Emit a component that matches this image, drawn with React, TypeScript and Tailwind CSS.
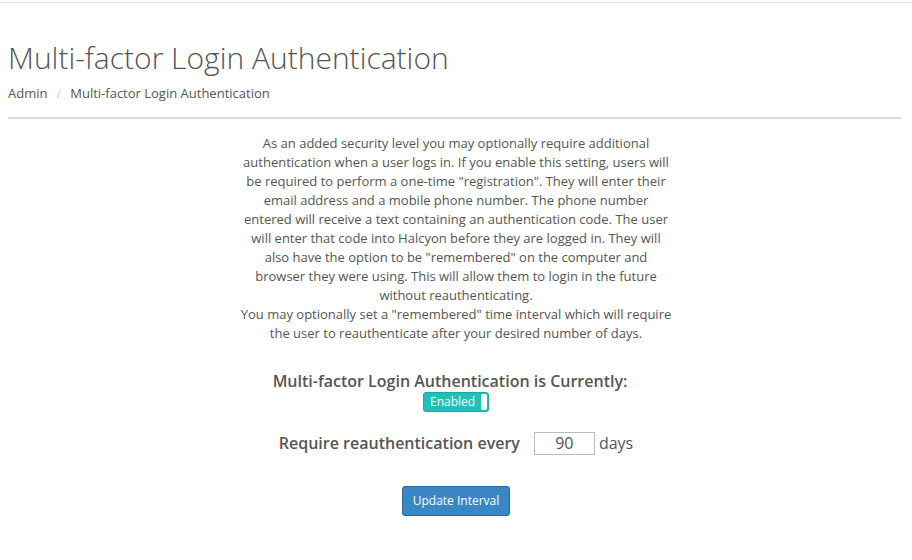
import React from "react";

export default function App() {
  return (
    <div className="w-[912px] h-[560px] bg-white overflow-hidden" style={{ fontFamily: '"Open Sans", sans-serif' }}>
      <div className="h-[2px]" />
      <div className="h-px bg-[#e6e6e6]" />
      <div className="px-2">
        <h1 className="mt-[38px] text-[30px] leading-[33px] font-light text-[#555]">Multi-factor Login Authentication</h1>
        <div className="mt-[10px] flex items-center text-[13px] leading-[18px] text-[#555]">
          <span>Admin</span>
          <span className="px-[9px] text-[#ccc]">/</span>
          <span>Multi-factor Login Authentication</span>
        </div>
        <div className="mt-[15px] mr-[2px] h-[2px] bg-[#dcdcdc]" />
        <div className="flex flex-col items-center text-[#555]">
          <p className="mt-[15px] w-[432px] text-center text-[13px] leading-[19px]">
            As an added security level you may optionally require additional authentication when a user logs in. If you enable this setting, users will be required to perform a one-time "registration". They will enter their email address and a mobile phone number. The phone number entered will receive a text containing an authentication code. The user will enter that code into Halcyon before they are logged in. They will also have the option to be "remembered" on the computer and browser they were using. This will allow them to login in the future without reauthenticating.
            <br />
            You may optionally set a "remembered" time interval which will require the user to reauthenticate after your desired number of days.
          </p>
          <div className="mt-[27px] pr-[12px] text-[16px] leading-[22px] font-semibold">Multi-factor Login Authentication is Currently:</div>
          <div className="flex h-[20px] w-[66px] items-center rounded-[3px] border border-[#1aa9a3] bg-[#22c0b9] pl-[6px] pr-[1px]">
            <span className="flex-1 text-[12px] leading-[18px] text-white">Enabled</span>
            <span className="h-[16px] w-[6px] rounded-[2px] bg-white" />
          </div>
          <div className="mt-[19px] flex items-center text-[16px] font-semibold">
            <span>Require reauthentication every</span>
            <input
              readOnly
              value="90"
              className="ml-[14px] mr-[4px] h-[23px] w-[61px] border border-[#bbb] text-center text-[16px] font-normal text-[#555] outline-none"
            />
            <span className="font-normal">days</span>
          </div>
          <button className="mt-[31px] h-[30px] w-[108px] rounded-[3px] border border-[#2a6a9e] bg-[#3a87c6] text-[12px] text-white">
            Update Interval
          </button>
        </div>
      </div>
    </div>
  );
}
